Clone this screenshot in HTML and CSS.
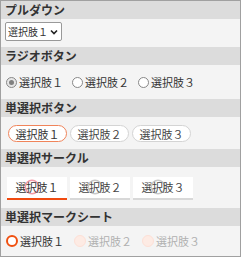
FILE: index.html
```html
<!DOCTYPE html>
<html lang="ja">
  <head>
    <meta charset="UTF-8" />
    <meta name="viewport" content="width=device-width, initial-scale=1.0" />
    <title>単選択サンプル</title>
    <link rel="stylesheet" href="styles.css">
  </head>
  <body>
    <div class="panel">
      <h3 class="head">プルダウン</h3>
      <div class="sec sec-select">
        <div class="select-wrap">
          <select class="pulldown">
            <option>選択肢１</option>
            <option>選択肢２</option>
            <option>選択肢３</option>
          </select>
          <svg class="chevron" width="8" height="6" viewBox="0 0 8 6">
            <path d="M1 1.5 L4 4.5 L7 1.5" fill="none" stroke="#222" stroke-width="1.6" />
          </svg>
        </div>
      </div>

      <h3 class="head">ラジオボタン</h3>
      <div class="sec sec-radio">
        <label class="radio checked"><span class="dot"></span>選択肢１</label>
        <label class="radio"><span class="dot"></span>選択肢２</label>
        <label class="radio"><span class="dot"></span>選択肢３</label>
      </div>

      <h3 class="head">単選択ボタン</h3>
      <div class="sec sec-pill">
        <button class="pill active">選択肢１</button>
        <button class="pill">選択肢２</button>
        <button class="pill">選択肢３</button>
      </div>

      <h3 class="head">単選択サークル</h3>
      <div class="sec sec-tab">
        <div class="tab active">選<span class="circle-mark">択</span>肢１</div>
        <div class="tab">選<span class="circle-mark">択</span>肢２</div>
        <div class="tab">選<span class="circle-mark">択</span>肢３</div>
      </div>

      <h3 class="head">単選択マークシート</h3>
      <div class="sec sec-mark">
        <label class="mark active"><span class="bubble"></span>選択肢１</label>
        <label class="mark"><span class="bubble"></span>選択肢２</label>
        <label class="mark"><span class="bubble"></span>選択肢３</label>
      </div>
    </div>
  </body>
</html>
```

FILE: styles.css
```css
body {
  margin: 0;
  font-family: "Noto Sans CJK JP", "Noto Sans", sans-serif;
  font-size: 12px;
  color: #333;
}

.panel {
  width: 239px;
  height: 255px;
  border: 1px solid #a0a0a0;
  background-color: #f4f4f4;
  overflow: hidden;
}

.head {
  margin: 0;
  height: 18px;
  line-height: 18px;
  padding-left: 4px;
  font-size: 12px;
  font-weight: bold;
  color: #333;
  background-color: #dcdcdc;
}

.sec {
  display: flex;
  align-items: center;
  padding-left: 5px;
}

.sec-select {
  height: 28px;
  align-items: flex-start;
  padding-top: 3px;
  padding-left: 4px;
  box-sizing: border-box;
}

.select-wrap {
  position: relative;
}

.pulldown {
  appearance: none;
  -webkit-appearance: none;
  font-family: inherit;
  font-size: 10px;
  height: 19px;
  width: 57px;
  padding: 0 0 0 2px;
  color: #333;
  border: 1px solid #999;
  border-radius: 2px;
  background-color: white;
}

.chevron {
  position: absolute;
  right: 4px;
  top: 7px;
  pointer-events: none;
}

.sec-radio {
  height: 34px;
  gap: 9px;
}

.radio {
  display: flex;
  align-items: center;
  gap: 2px;
  font-size: 11px;
  color: #333;
}

.radio .dot {
  width: 9px;
  height: 9px;
  border: 1px solid #888;
  border-radius: 50%;
  background-color: white;
  position: relative;
}

.radio.checked .dot {
  background-color: #e6e6e6;
}

.radio.checked .dot::after {
  content: "";
  position: absolute;
  left: 2px;
  top: 2px;
  width: 5px;
  height: 5px;
  border-radius: 50%;
  background-color: #808080;
}

.sec-pill {
  height: 32px;
  gap: 3px;
  padding-left: 7px;
}

.pill {
  font-family: inherit;
  font-size: 11px;
  color: #444;
  width: 59px;
  height: 17px;
  padding: 0;
  border: 1px solid #d4d4d4;
  border-radius: 9px;
  background-color: white;
}

.pill.active {
  border: 1.5px solid #f0845a;
  color: #333;
}

.sec-tab {
  height: 41px;
  gap: 3px;
  padding-left: 6px;
  padding-top: 2px;
  box-sizing: border-box;
}

.tab {
  width: 60px;
  height: 21px;
  line-height: 21px;
  text-align: center;
  font-size: 11px;
  color: #444;
  background-color: white;
  border-bottom: 2px solid #d8d8d8;
}

.tab.active {
  border-bottom-color: #f04a10;
  color: #333;
}

.circle-mark {
  display: inline-block;
  width: 12px;
  height: 12px;
  line-height: 12px;
  margin: 0 -1px;
  border-radius: 50%;
  box-shadow: 0 0 0 1.5px #c8c8c8;
}

.tab.active .circle-mark {
  box-shadow: 0 0 0 1.5px #f39aa6;
}

.sec-mark {
  height: 29px;
  gap: 10px;
  padding-left: 5px;
}

.mark {
  display: flex;
  align-items: center;
  gap: 2px;
  font-size: 11px;
  color: #b0b0b0;
}

.mark .bubble {
  width: 10px;
  height: 10px;
  border-radius: 50%;
  background-color: #fdebe4;
  border: 1px solid #fde0d6;
}

.mark.active {
  color: #333;
}

.mark.active .bubble {
  width: 8px;
  height: 8px;
  background-color: white;
  border: 2px solid #f05010;
}
```
